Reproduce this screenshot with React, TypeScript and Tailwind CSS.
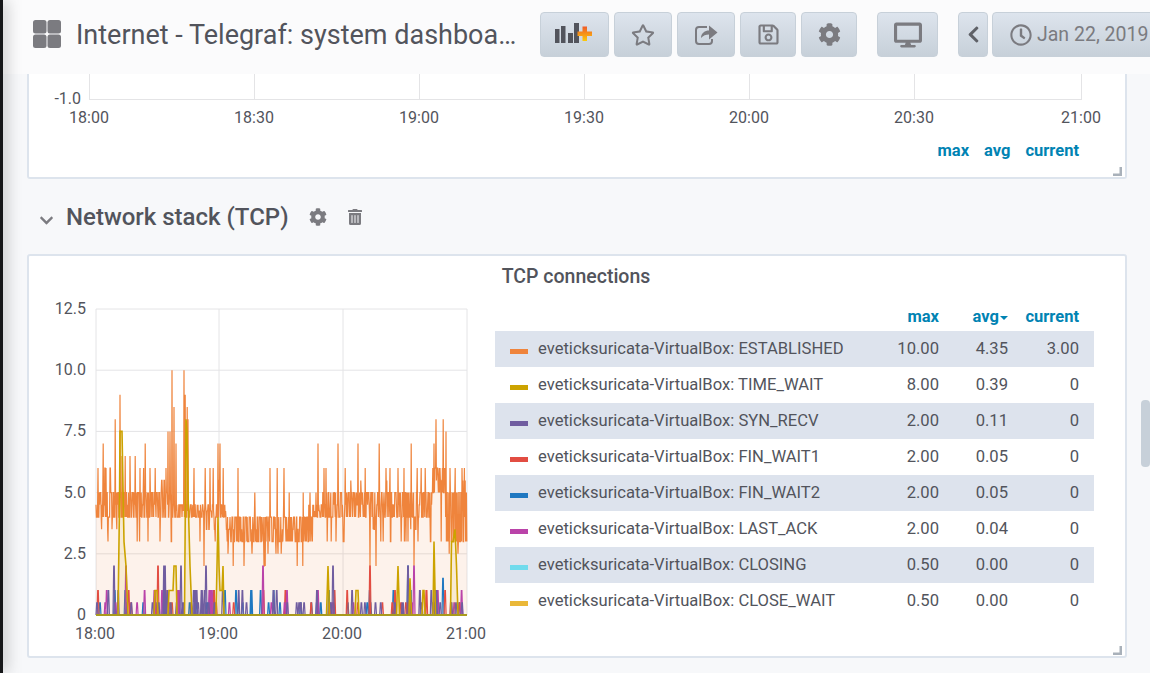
import { FaRegStar, FaRegSave, FaCog, FaDesktop, FaChevronLeft, FaRegClock, FaChevronDown, FaTrashAlt } from "react-icons/fa";

function makeRng(seed: number) {
  let s = seed;
  return () => {
    s = (s + 0x6d2b79f5) | 0;
    let t = Math.imul(s ^ (s >>> 15), 1 | s);
    t = (t + Math.imul(t ^ (t >>> 7), 61 | t)) ^ t;
    return ((t ^ (t >>> 14)) >>> 0) / 4294967296;
  };
}

const toY = (v: number) => 615 - v * 24.48;
const STEP = 0.4;

// band: [from, to, low, high]
const bands = [
  [96, 172, 4, 5],
  [172, 226, 4, 4.5],
  [226, 313, 3, 4],
  [313, 322, 4, 4.5],
  [322, 432, 4, 5],
  [432, 446, 5, 6],
  [446, 468, 3, 5],
];

const orangePeaks: [number, number][] = [
  [98, 6], [103, 7], [106, 6], [112, 6], [115, 8], [120, 9], [122, 6.5], [125, 6.5], [130, 6.5], [135, 6.5], [140, 6], [145, 7],
  [150, 6], [166, 6], [168, 7.5], [170, 7.5], [172, 10], [174, 8.5], [176, 7], [184, 10], [185, 9], [187, 8.5], [188, 8], [194, 6],
  [205, 6], [210, 6], [213, 6], [218, 7], [220, 7], [223, 6], [238, 6], [270, 6], [277, 6], [284, 6], [289, 5], [303, 5], [310, 5],
  [318, 7], [324, 6], [326, 6], [338, 7], [345, 6], [358, 7], [365, 6], [379, 7], [386, 6], [390, 6], [398, 6], [404, 6], [411, 7],
  [417, 6], [421, 6], [425, 6], [434, 7], [436, 8], [439, 6], [443, 8], [446, 7.5], [450, 6], [455, 6], [462, 6],
];
const orangeDips: [number, number][] = [
  [108, 3], [112, 3.5], [137, 3], [148, 3], [160, 3], [200, 3], [204, 2], [215, 3], [228, 2.5], [233, 2], [244, 2], [252, 2.5], [265, 2],
  [268, 2.5], [278, 2.5], [297, 2], [327, 3], [331, 3], [336, 3], [344, 3], [370, 2], [376, 2], [383, 3], [401, 3], [406, 3], [414, 2],
  [418, 3], [441, 3], [449, 2.5], [458, 2.5],
];

function buildOrange() {
  const rand = makeRng(7);
  const samples: [number, number][] = [];
  let high = false;
  let left = 0;
  let excursion = 0;
  let excursionLeft = 0;
  for (let x = 96; x <= 467; x += STEP) {
    const band = bands.find((b) => x >= b[0] && x < b[1]) ?? bands[6];
    if (left <= 0) {
      high = !high;
      left = 1 + Math.floor(rand() * 4);
    }
    left--;
    let v = high ? band[3] : band[2];
    if (rand() < 0.2) v = band[2] + (band[3] - band[2]) / 2;
    // short runs off the band, so it doesn't read as a solid bar
    if (excursionLeft <= 0 && rand() < 0.05) {
      excursion = rand() < 0.6 ? band[2] - (rand() < 0.5 ? 0.5 : 1) : band[3] + (rand() < 0.6 ? 0.5 : 1);
      excursionLeft = 1 + Math.floor(rand() * 2);
    }
    if (excursionLeft > 0) {
      v = excursion;
      excursionLeft--;
    }
    samples.push([x, v]);
  }
  for (const [px, pv] of [...orangePeaks, ...orangeDips]) {
    const idx = Math.round((px - 96) / STEP);
    if (samples[idx]) samples[idx][1] = pv;
  }
  return samples;
}

const orange = buildOrange();
const orangeLine = orange.map(([x, v]) => `${x.toFixed(1)},${toY(v).toFixed(1)}`).join(" ");
const orangeArea = `96,615 ${orangeLine} 467,615`;

function spikes(seed: number, count: number, fixed: [number, number][]) {
  const rand = makeRng(seed);
  const list: [number, number][] = [...fixed];
  for (let i = 0; i < count; i++) {
    const x = 97 + rand() * 368;
    list.push([x, rand() < 0.6 ? 0.5 : 1]);
  }
  list.sort((a, b) => a[0] - b[0]);
  const pts = ["96,615"];
  for (const [x, v] of list) {
    pts.push(`${(x - 1).toFixed(1)},615`, `${(x - 0.3).toFixed(1)},${toY(v).toFixed(1)}`, `${(x + 0.3).toFixed(1)},${toY(v).toFixed(1)}`, `${(x + 1).toFixed(1)},615`);
  }
  pts.push("467,615");
  return pts.join(" ");
}

const smallSeries = [
  { color: "#1F78C1", points: spikes(11, 40, [[408, 2], [443, 1.5], [100, 0.5]]) },
  { color: "#E24D42", points: spikes(23, 28, [[158, 2], [370, 2], [98, 1]]) },
  { color: "#BA43A9", points: spikes(37, 28, [[126, 2], [263, 2], [414, 2]]) },
  { color: "#705DA0", points: spikes(41, 60, [[97, 0.5], [114, 2], [164, 2], [165, 2], [181, 2], [206, 2], [333, 2], [408, 2]]) },
];

const yellowHumps: [number, number][] = [
  [118, 0], [119.5, 4.5], [120, 7.5], [122, 7.5], [124, 3], [126, 2], [128, 0],
  [154, 0], [155, 1], [157, 1], [158, 0], [168, 0], [169, 1], [173, 1], [174, 2], [176, 2], [177, 0],
  [184.5, 0], [186, 8], [187, 7.5], [188, 5], [190, 2], [192, 0],
  [216, 0], [217, 2], [218, 4], [219, 2], [220, 1], [222, 1], [223, 2], [224, 0],
  [326.5, 0], [328, 2], [329.5, 0], [355, 0], [356, 1], [358, 1], [359, 0],
  [396.5, 0], [398, 2], [399.5, 0], [409, 0], [410, 1.5], [411.5, 0], [422, 0], [423, 1], [424, 1], [425, 0],
  [433, 0], [434, 3], [435.5, 0], [450.5, 0], [451.5, 3], [453, 3], [455, 3.5], [456.5, 2], [458, 0],
];
const yellowLine = ["96,615", ...yellowHumps.map(([x, v]) => `${x},${toY(v).toFixed(1)}`), "467,615"].join(" ");

const legendRows = [
  { name: "ESTABLISHED", color: "bg-[#EF843C]", max: "10.00", avg: "4.35", current: "3.00" },
  { name: "TIME_WAIT", color: "bg-[#CCA300]", max: "8.00", avg: "0.39", current: "0" },
  { name: "SYN_RECV", color: "bg-[#705DA0]", max: "2.00", avg: "0.11", current: "0" },
  { name: "FIN_WAIT1", color: "bg-[#E24D42]", max: "2.00", avg: "0.05", current: "0" },
  { name: "FIN_WAIT2", color: "bg-[#1F78C1]", max: "2.00", avg: "0.05", current: "0" },
  { name: "LAST_ACK", color: "bg-[#BA43A9]", max: "2.00", avg: "0.04", current: "0" },
  { name: "CLOSING", color: "bg-[#70DBED]", max: "0.50", avg: "0.00", current: "0" },
  { name: "CLOSE_WAIT", color: "bg-[#EAB839]", max: "0.50", avg: "0.00", current: "0" },
];

function NavButton({ className, children }: { className: string; children: React.ReactNode }) {
  return (
    <button className={`h-[45px] shrink-0 flex items-center justify-center rounded-[4px] border border-[#c7d0d9] bg-gradient-to-b from-[#dde4ed] to-[#c7d0d9] text-[#7b7b80] ${className}`}>
      {children}
    </button>
  );
}

function ResizeHandle() {
  return (
    <svg className="absolute right-[3px] bottom-[1px]" width="9" height="9" viewBox="0 0 9 9">
      <path d="M6.5 0H9V9H0V6.5H6.5Z" fill="#a9b1ba" />
    </svg>
  );
}

function TopChart() {
  const xs = [89, 254, 419, 584, 749, 914, 1081];
  const labels = ["18:00", "18:30", "19:00", "19:30", "20:00", "20:30", "21:00"];
  return (
    <svg className="block" width="1096" height="60" viewBox="29 74 1096 60">
      {xs.map((x) => (
        <line key={x} x1={x + 0.5} x2={x + 0.5} y1="74" y2="100" stroke="#e4e4e6" />
      ))}
      <line x1="89" x2="1082" y1="99.5" y2="99.5" stroke="#e4e4e6" />
      <text x="81" y="104" textAnchor="end" fontSize="16" fill="#52545c">-1.0</text>
      {xs.map((x, i) => (
        <text key={x} x={x} y="123" textAnchor="middle" fontSize="16" fill="#52545c">{labels[i]}</text>
      ))}
    </svg>
  );
}

function TcpChart() {
  const yTicks: [string, number][] = [["12.5", 12.5], ["10.0", 10], ["7.5", 7.5], ["5.0", 5], ["2.5", 2.5], ["0", 0]];
  const xTicks: [string, number][] = [["18:00", 96], ["19:00", 219], ["20:00", 343], ["21:00", 467]];
  return (
    <svg className="block shrink-0" width="466" height="356" viewBox="29 296 466 356">
      {yTicks.map(([label, v]) => (
        <g key={label}>
          <line x1="96" x2="467" y1={toY(v)} y2={toY(v)} stroke="#e4e4e6" />
          <text x="86" y={toY(v) + 5} textAnchor="end" fontSize="16" fill="#52545c">{label}</text>
        </g>
      ))}
      {xTicks.map(([label, x]) => (
        <g key={label}>
          <line x1={x} x2={x} y1="309" y2="615" stroke="#e4e4e6" />
          <text x={x - 1} y="638.5" textAnchor="middle" fontSize="16" fill="#52545c">{label}</text>
        </g>
      ))}
      <polygon points={orangeArea} fill="#EF843C" fillOpacity="0.1" />
      <polyline points={orangeLine} fill="none" stroke="#EF843C" strokeWidth="1.2" />
      {smallSeries.map((s) => (
        <polyline key={s.color} points={s.points} fill={s.color} fillOpacity="0.1" stroke={s.color} strokeWidth="1.2" />
      ))}
      <polyline points={yellowLine} fill="#CCA300" fillOpacity="0.1" stroke="#CCA300" strokeWidth="1.6" />
      <line x1="96" x2="467" y1="615" y2="615" stroke="#a99a1e" strokeWidth="2" />
    </svg>
  );
}

export default function App() {
  return (
    <div className="relative flex h-[673px] w-[1150px] overflow-hidden bg-[#f7f8fa] font-['Roboto',sans-serif] text-[#52545c]">
      {/* sidebar edge */}
      <div className="z-10 w-[3px] shrink-0 bg-[#161719] shadow-[0_0_16px_rgba(0,0,0,0.75)]" />

      <div className="min-w-0 flex-1">
        {/* Top navbar */}
        <div className="flex h-[74px] items-start bg-[#fbfbfc] pt-[12px]">
          <svg className="ml-[30px] mt-[8px] shrink-0" width="28" height="28" viewBox="0 0 28 28" fill="#7b7b80">
            <rect x="0" y="0" width="13.5" height="13.5" rx="2.5" />
            <rect x="14.5" y="0" width="13.5" height="13.5" rx="2.5" />
            <rect x="0" y="14.5" width="13.5" height="13.5" rx="2.5" />
            <rect x="14.5" y="14.5" width="13.5" height="13.5" rx="2.5" />
          </svg>
          <div className="ml-[15px] mt-[4px] w-[441px] shrink-0 whitespace-nowrap text-[27px] leading-[38px]">
            Internet - Telegraf: system dashboa…
          </div>
          <NavButton className="ml-[23px] w-[69px]">
            <svg width="40" height="26" viewBox="0 0 40 26">
              <path d="M0 7H4.5V21H0ZM6 4H10.5V21H6ZM13 11H18V21H13ZM19 1H24V21H19Z" fill="#52545c" />
              <defs>
                <linearGradient id="plus" x1="0" y1="0" x2="0" y2="1">
                  <stop offset="0" stopColor="#f05a28" />
                  <stop offset="1" stopColor="#fbca0a" />
                </linearGradient>
              </defs>
              <path d="M27.5 4.5H32V9.5H37V14H32V19H27.5V14H22.5V9.5H27.5Z" fill="url(#plus)" />
            </svg>
          </NavButton>
          <NavButton className="ml-[5px] w-[58px]"><FaRegStar size={24} /></NavButton>
          <NavButton className="ml-[5px] w-[58px]">
            <svg width="24" height="24" viewBox="0 0 24 24" fill="currentColor">
              <path d="M13 4H5a3 3 0 0 0-3 3V18a3 3 0 0 0 3 3H15a3 3 0 0 0 3-3V16" fill="none" stroke="currentColor" strokeWidth="2" />
              <path d="M7 15C7 10 11 7.5 15 7.5V2.5L23.5 9.5L15 16.5V11.5C12 11.5 9 12.5 7 15Z" />
            </svg>
          </NavButton>
          <NavButton className="ml-[5px] w-[56px]"><FaRegSave size={23} /></NavButton>
          <NavButton className="ml-[5px] w-[56px]"><FaCog size={23} /></NavButton>
          <NavButton className="ml-[20px] w-[61px]"><FaDesktop size={28} /></NavButton>
          <NavButton className="ml-[20px] w-[30px]"><FaChevronLeft size={19} className="text-[#5f6167]" /></NavButton>
          <NavButton className="ml-[4px] w-[200px] !justify-start pl-[17px] text-[19.5px]">
            <FaRegClock size={22} />
            <span className="ml-[5px] whitespace-nowrap">Jan 22, 2019</span>
          </NavButton>
        </div>

        {/* Panel cut off by the navbar */}
        <div className="relative ml-[24px] h-[105px] w-[1100px] rounded-b-[3px] border-x-2 border-b-2 border-[#dde4ed] bg-white">
          <TopChart />
          <div className="flex h-[34px] items-center justify-end pr-[46px] pt-[1px] text-[16.5px] font-bold text-[#0083b3]">
            <span>max</span>
            <span className="ml-[15px]">avg</span>
            <span className="ml-[15px]">current</span>
          </div>
          <ResizeHandle />
        </div>

        {/* Row header */}
        <div className="ml-[36px] flex h-[75px] items-center pt-[1px]">
          <FaChevronDown size={15} className="mt-[7px] text-[#7b7b80]" />
          <span className="ml-[12px] text-[24px] font-medium">Network stack (TCP)</span>
          <FaCog size={18} className="ml-[20px] text-[#7b7b80]" />
          <FaTrashAlt size={16} className="ml-[20px] text-[#7b7b80]" />
        </div>

        {/* TCP connections panel */}
        <div className="relative ml-[24px] h-[404px] w-[1100px] rounded-[3px] border-2 border-[#dde4ed] bg-white">
          <div className="h-[40px] pt-[8px] pr-[2px] text-center text-[19.5px] font-medium leading-[26px]">TCP connections</div>
          <div className="flex">
            <TcpChart />
            <div className="w-[599px] pt-[7px]">
              <div className="flex h-[28px] items-center pr-[15px] pt-[1px] text-right text-[16.5px] font-bold text-[#0083b3]">
                <span className="flex-1">max</span>
                <span className="flex w-[69px] items-center justify-end">
                  avg
                  <span className="ml-[1px] mt-[1px] h-0 w-0 border-x-[4px] border-t-[4px] border-x-transparent border-t-[#0083b3]" />
                </span>
                <span className="w-[71px]">current</span>
              </div>
              {legendRows.map((row, i) => (
                <div key={row.name} className={`flex h-[36px] items-center pl-[15px] pr-[15px] text-[16.6px] ${i % 2 === 0 ? "bg-[#dde3ed]" : ""}`}>
                  <span className={`mt-[5px] h-[5px] w-[18px] shrink-0 ${row.color}`} />
                  <span className="ml-[10px] flex-1 whitespace-nowrap">eveticksuricata-VirtualBox: {row.name}</span>
                  <span className="text-right">{row.max}</span>
                  <span className="w-[69px] text-right">{row.avg}</span>
                  <span className="w-[71px] text-right">{row.current}</span>
                </div>
              ))}
            </div>
          </div>
          <ResizeHandle />
        </div>
      </div>

      {/* page scrollbar */}
      <div className="absolute left-[1141px] top-[400px] h-[67px] w-[9px] rounded-[4px] bg-[#c7d0d9]" />
    </div>
  );
}
